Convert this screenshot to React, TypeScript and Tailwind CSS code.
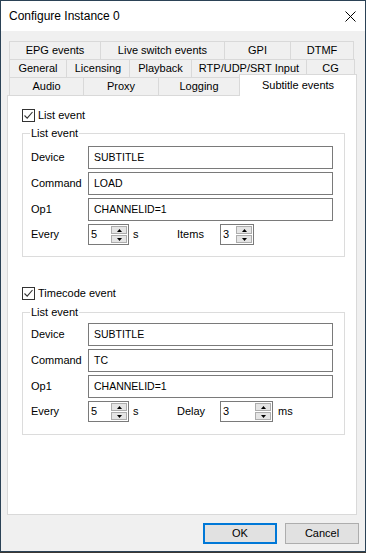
import type { ReactNode } from 'react'

const tabRows: { label: string; w: string }[][] = [
  [
    { label: 'EPG events', w: 'w-[91px]' },
    { label: 'Live switch events', w: 'w-[124px]' },
    { label: 'GPI', w: 'w-[66px]' },
    { label: 'DTMF', w: 'w-[64px]' },
  ],
  [
    { label: 'General', w: 'w-[57px]' },
    { label: 'Licensing', w: 'w-[63px]' },
    { label: 'Playback', w: 'w-[62px]' },
    { label: 'RTP/UDP/SRT Input', w: 'w-[115px]' },
    { label: 'CG', w: 'w-[49px]' },
  ],
]

function Tab({ label, w, last }: { label: string; w: string; last?: boolean }) {
  return (
    <div
      className={`${w} h-[18px] flex items-center justify-center border-t border-l border-[#d9d9d9] bg-[#f0f0f0] ${
        last ? 'border-r' : ''
      }`}
    >
      {label}
    </div>
  )
}

function Checkbox({ label }: { label: string }) {
  return (
    <div className="flex items-center h-[13px]">
      <div className="w-[13px] h-[13px] border border-[#333333] bg-white flex items-center justify-center">
        <svg width="11" height="11" viewBox="0 0 11 11">
          <path d="M1.5 5.5 L4.2 8.2 L9.5 2" fill="none" stroke="#333333" strokeWidth="1.1" />
        </svg>
      </div>
      <span className="ml-[3px] leading-[13px]">{label}</span>
    </div>
  )
}

function TextRow({ label, value }: { label: string; value: string }) {
  return (
    <div className="flex items-center h-[23px]">
      <span className="w-[57px]">{label}</span>
      <div className="w-[245px] h-[23px] border border-[#7a7a7a] bg-white flex items-center pl-[5px] text-[10.5px]">
        {value}
      </div>
    </div>
  )
}

function Spin({ value, w }: { value: string; w: string }) {
  return (
    <div className={`${w} h-[21px] border border-[#7a7a7a] bg-white flex`}>
      <span className="flex-1 pl-[2px] leading-[19px]">{value}</span>
      <div className="w-[17px] flex flex-col py-px pr-px gap-px">
        <div className="flex-1 border border-[#adadad] bg-[#e5e5e5] flex items-center justify-center">
          <svg width="5" height="3" viewBox="0 0 5 3">
            <path d="M0 3 L2.5 0 L5 3 Z" fill="#000" />
          </svg>
        </div>
        <div className="flex-1 border border-[#adadad] bg-[#e5e5e5] flex items-center justify-center">
          <svg width="5" height="3" viewBox="0 0 5 3">
            <path d="M0 0 L5 0 L2.5 3 Z" fill="#000" />
          </svg>
        </div>
      </div>
    </div>
  )
}

function Group({ title, pt, pb, children }: { title: string; pt: string; pb: string; children: ReactNode }) {
  return (
    <div className={`relative w-[323px] border border-[#dcdcdc] pl-[8px] ${pt} ${pb} flex flex-col gap-[3px]`}>
      <span className="absolute left-[7px] -top-[7px] bg-white px-px leading-[13px]">{title}</span>
      {children}
    </div>
  )
}

export default function App() {
  return (
    <div className="w-[366px] h-[553px] bg-[#3d3833] font-['Liberation_Sans',Arial,sans-serif] text-[11px] text-black">
      <div className="w-[366px] h-[552px] border border-[#2b4256] bg-[#f0f0f0] flex flex-col">
        <div className="h-[30px] bg-white flex items-center justify-between pl-[8px] pr-[9px] text-[12px]">
          <span>Configure Instance 0</span>
          <svg width="11" height="11" viewBox="0 0 11 11">
            <path d="M0.5 0.5 L10.5 10.5 M10.5 0.5 L0.5 10.5" stroke="#000" strokeWidth="1" />
          </svg>
        </div>

        <div className="pl-[6px] pt-[10px]">
          <div className="ml-[2px]">
            {tabRows.map((row, i) => (
              <div key={i} className="flex h-[18px]">
                {row.map((t, j) => (
                  <Tab key={t.label} label={t.label} w={t.w} last={j === row.length - 1} />
                ))}
              </div>
            ))}
            <div className="flex items-start h-[18px]">
              <Tab label="Audio" w="w-[74px]" />
              <Tab label="Proxy" w="w-[75px]" />
              <Tab label="Logging" w="w-[81px]" />
              <div className="relative z-10 -mt-[3px] w-[118px] h-[22px] border-t border-l border-r border-[#d9d9d9] bg-white flex items-center justify-center">
                Subtitle events
              </div>
            </div>
          </div>

          <div className="w-[350px] h-[420px] border border-[#d9d9d9] bg-white pl-[14px] pt-[13px]">
            <Checkbox label="List event" />
            <div className="mt-[11px]">
              <Group title="List event" pt="pt-[12px]" pb="pb-[11px]">
                <TextRow label="Device" value="SUBTITLE" />
                <TextRow label="Command" value="LOAD" />
                <TextRow label="Op1" value="CHANNELID=1" />
                <div className="flex items-center h-[21px]">
                  <span className="w-[57px]">Every</span>
                  <Spin value="5" w="w-[41px]" />
                  <span className="ml-[4px] w-[44px]">s</span>
                  <span className="w-[43px]">Items</span>
                  <Spin value="3" w="w-[34px]" />
                </div>
              </Group>
            </div>

            <div className="mt-[30px]">
              <Checkbox label="Timecode event" />
            </div>
            <div className="mt-[12px]">
              <Group title="List event" pt="pt-[10px]" pb="pb-[12px]">
                <TextRow label="Device" value="SUBTITLE" />
                <TextRow label="Command" value="TC" />
                <TextRow label="Op1" value="CHANNELID=1" />
                <div className="flex items-center h-[21px]">
                  <span className="w-[57px]">Every</span>
                  <Spin value="5" w="w-[41px]" />
                  <span className="ml-[4px] w-[44px]">s</span>
                  <span className="w-[43px]">Delay</span>
                  <Spin value="3" w="w-[53px]" />
                  <span className="ml-[5px]">ms</span>
                </div>
              </Group>
            </div>
          </div>
        </div>

        <div className="flex justify-end gap-[8px] pr-[6px] mt-[8px]">
          <button className="w-[74px] h-[21px] border-2 border-[#0078d7] bg-[#e1e1e1] text-[11px] leading-none">
            OK
          </button>
          <button className="w-[74px] h-[21px] border border-[#adadad] bg-[#e1e1e1] text-[11px] leading-none">
            Cancel
          </button>
        </div>
      </div>
    </div>
  )
}
